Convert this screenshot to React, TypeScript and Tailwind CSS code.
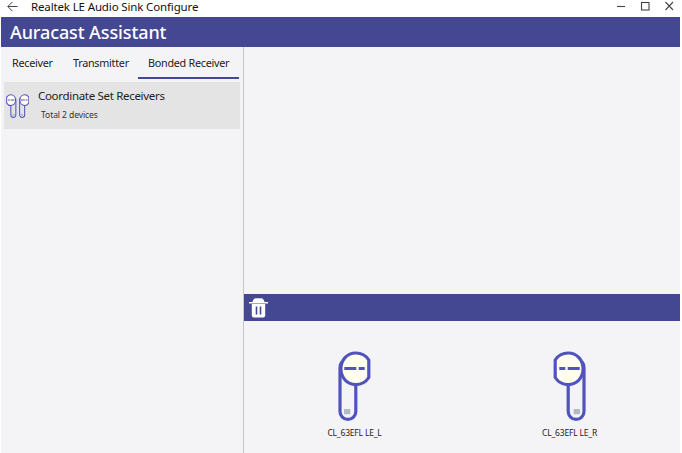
import React from "react";

function Earbud({ className, mirrored = false, weight = 3.2 }: { className: string; mirrored?: boolean; weight?: number }) {
  return (
    <svg viewBox="0 0 33 70" className={className} fill="none" preserveAspectRatio="none">
      <g transform={mirrored ? "translate(33 0) scale(-1 1)" : undefined}>
        <path d="M4 11Q2 13 2 17V60.500a7.800 7.800 0 0 0 15.800 0V30" stroke="#5153bd" strokeWidth={weight} />
        <path
          d="M30.800 9V26.500A15.600 15.600 0 0 1 17.800 33.600C9 33.600 2.900 26.500 2.900 17.800S9 2 17.800 2C23.500 2 28 4.600 30.800 9Z"
          fill="#fffdec"
          stroke="#5153bd"
          strokeWidth={weight}
        />
        <path d="M6.300 17.500H18.300M20.700 17.500H26.700" stroke="#5153bd" strokeWidth={3} />
        <rect x="6" y="58" width="6.300" height="5.200" fill="#b3bac2" />
      </g>
    </svg>
  );
}

function TitleBar() {
  return (
    <div className="flex h-[17px] shrink-0 items-start bg-white">
      <svg className="ml-[6px] mt-[1px] h-[11px] w-[11px]" viewBox="0 0 11 11" fill="none" stroke="#444" strokeWidth="1">
        <path d="M10.500 5.500H1M5.300 1L.8 5.500L5.300 10" />
      </svg>
      <span className="ml-[13px] -mt-px whitespace-nowrap text-[11.5px] leading-[16px] tracking-[-0.14px] text-[#111]">
        Realtek LE Audio Sink Configure
      </span>
      <svg className="ml-auto mr-[6px] h-[13px] w-[60px]" viewBox="0 0 60 13" fill="none" stroke="#444" strokeWidth="1.100">
        <path d="M3 6.500H11" />
        <rect x="27.500" y="2.500" width="7.500" height="7.500" />
        <path d="M51.500 2L59 10M59 2L51.500 10" />
      </svg>
    </div>
  );
}

function Sidebar() {
  return (
    <aside className="flex w-[243px] shrink-0 flex-col border-r border-[#c5c6ce]">
      <nav className="flex h-[32px] text-[10.8px] leading-[32px] tracking-[-0.27px] text-[#222]">
        <div className="w-[61px] whitespace-nowrap pl-[11px]">Receiver</div>
        <div className="w-[76px] whitespace-nowrap pl-[11px]">Transmitter</div>
        <div className="w-[101px] whitespace-nowrap border-b-2 border-[#444791] pl-[10px]">Bonded Receiver</div>
      </nav>
      <div className="ml-[3px] mt-[3px] flex h-[47px] w-[236px] bg-[#e4e4e4]">
        <div className="ml-[2px] mt-[12px] flex gap-[2px]">
          <Earbud className="h-[24px] w-[10.5px]" weight={3.200} mirrored />
          <Earbud className="h-[24px] w-[10.5px]" weight={3.200} />
        </div>
        <div className="ml-[9px] flex flex-col whitespace-nowrap">
          <span className="mt-[6px] text-[11.5px] leading-[16px] tracking-[-0.31px] text-[#222]">
            Coordinate Set Receivers
          </span>
          <span className="ml-[3px] mt-[4px] text-[8.500px] leading-[14px] tracking-[-0.07px] text-[#333]">
            Total 2 devices
          </span>
        </div>
      </div>
    </aside>
  );
}

function Device({ name, mirrored = false }: { name: string; mirrored?: boolean }) {
  return (
    <div className="flex w-[71px] flex-col items-center">
      <Earbud className="h-[70px] w-[33px]" mirrored={mirrored} />
      <span className="mt-[5px] whitespace-nowrap text-[8.500px] leading-[14px] tracking-[-0.18px] text-[#222]">{name}</span>
    </div>
  );
}

export default function App() {
  return (
    <div className="flex h-[453px] w-[682px] flex-col overflow-hidden bg-white pl-px pr-[2px] font-['Noto_Sans',sans-serif]">
      <TitleBar />
      <header className="h-[30px] shrink-0 bg-[#444791] pl-[9px] text-[18px] font-medium leading-[30px] tracking-[-0.11px] text-white">
        Auracast Assistant
      </header>
      <div className="flex min-h-0 flex-1 bg-[#f4f4f7]">
        <Sidebar />
        <main className="flex flex-1 flex-col">
          <div className="h-[247px] shrink-0" />
          <div className="flex h-[27px] shrink-0 bg-[#444791]">
            <svg className="ml-[5px] mt-[3px] h-[21px] w-[19px]" viewBox="0 0 19 21">
              <path d="M3.500 5C4 2.500 5 1.200 7 1.200H12C14 1.200 15 2.500 15.500 5H19V6.600H0V5Z" fill="white" />
              <path d="M2.800 6.900H16.200V18.500Q16.200 20.500 14.200 20.500H4.800Q2.800 20.500 2.800 18.500Z" fill="white" />
              <path d="M7.500 9.500V17.500M11.500 9.500V17.500" stroke="#444791" strokeWidth="1.600" />
            </svg>
          </div>
          <div className="flex pl-[75px] pt-[30px]">
            <Device name="CL_63EFL LE_L" />
            <div className="w-[144px]" />
            <Device name="CL_63EFL LE_R" mirrored />
          </div>
        </main>
      </div>
    </div>
  );
}
